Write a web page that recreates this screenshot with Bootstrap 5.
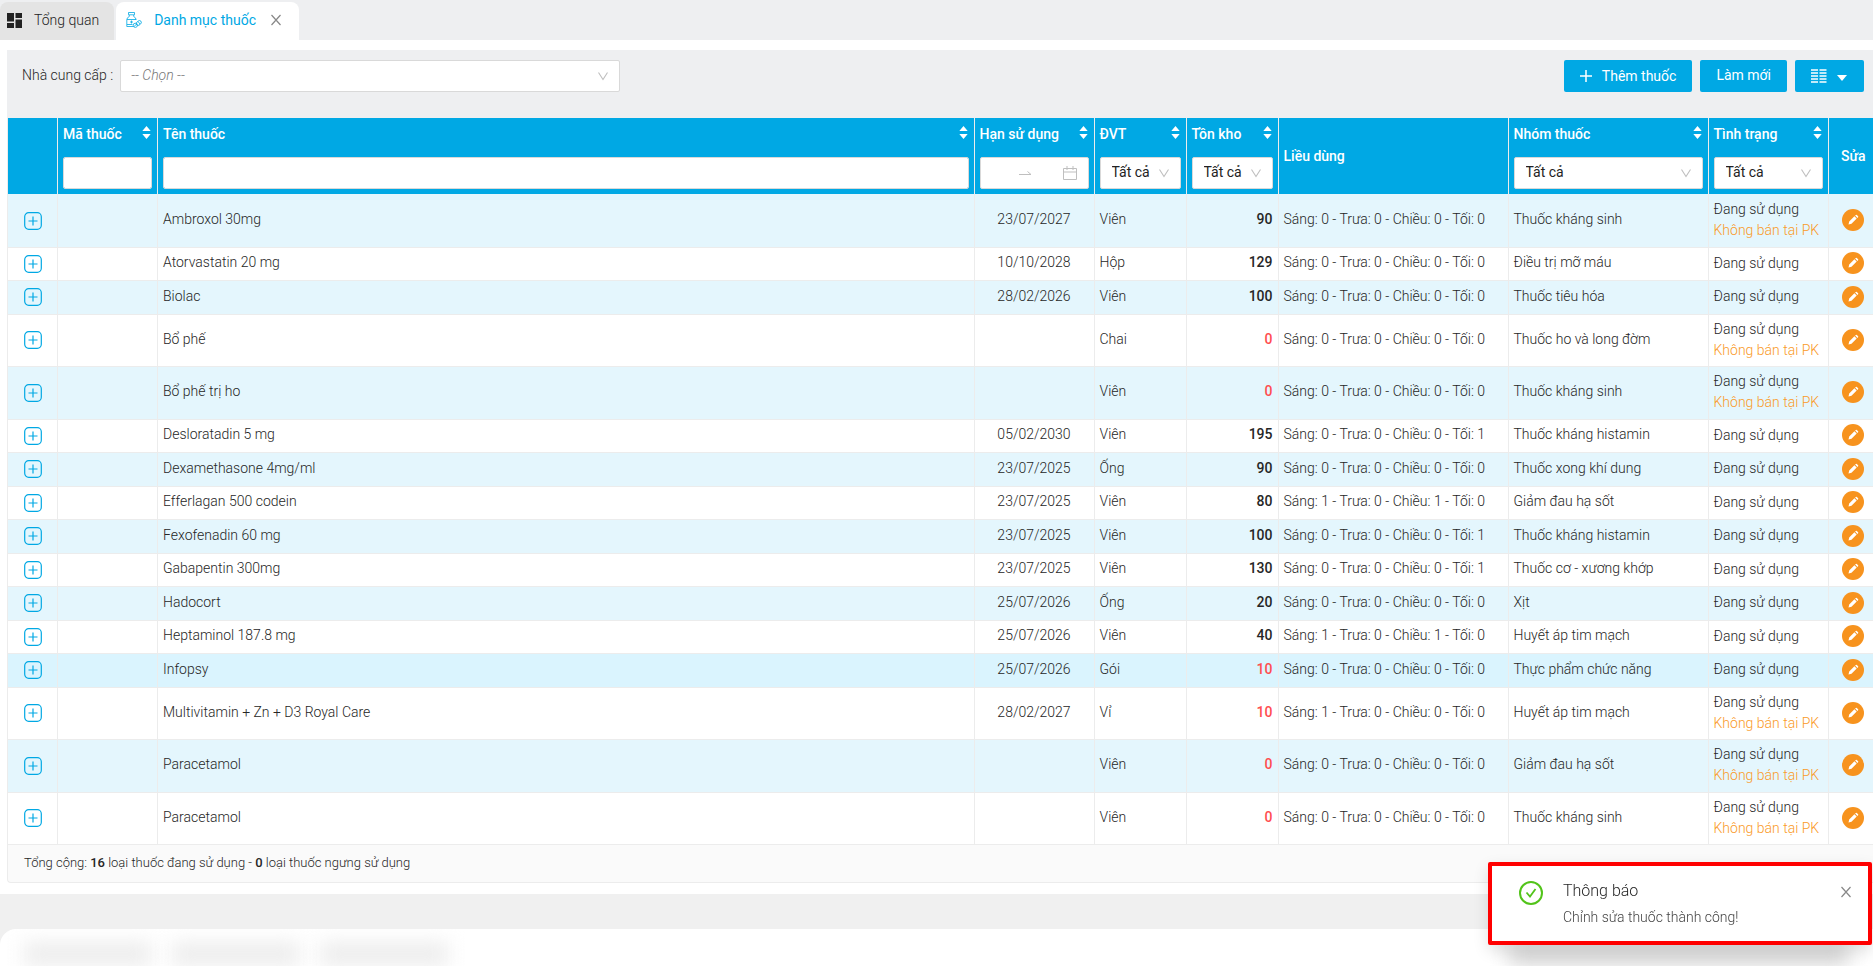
<!DOCTYPE html>
<html lang="vi">
<head>
<meta charset="utf-8">
<meta name="viewport" content="width=device-width, initial-scale=1">
<title>Danh mục thuốc</title>
<link href="https://cdn.jsdelivr.net/npm/bootstrap@5.3.0/dist/css/bootstrap.min.css" rel="stylesheet">
<style>
:root{--brand:#00a8e4;--panel:#eeeff1;--line:#ececec}
body{font-family:Roboto,"Noto Sans",sans-serif;font-size:14px;font-weight:300;line-height:21px;color:#262626;background:#f0f0f0;overflow-x:hidden}
.tabs{background:var(--panel);padding-top:2px;gap:2px}
.tab-link{height:38px;border-radius:8px 8px 0 0;background:#e4e4e4;color:#222;text-decoration:none;padding:0 15px 2px 7px;gap:12px}
.tab-on{background:#fff;color:var(--brand);font-weight:400;padding:0 17px 2px 10px}
.tab-on a{color:inherit;text-decoration:none;margin-right:2px}
.bare{border:0;background:none;padding:0;line-height:0}
.sheet{padding:10px 0 11px 7px}
.filters{background:var(--panel);height:68px;padding:10px 9px 0 15px}
.filters label{padding-top:5px;margin-right:7px}
.picker{width:500px;height:32px}
.form-select,.form-control{font-size:14px;font-weight:400;line-height:20px;color:#222;border:1px solid #d9d9d9;border-radius:2px;height:32px;min-height:0;padding:0 5px 2px 11px}
.form-select{background:#fff url("data:image/svg+xml,%3Csvg xmlns='http://www.w3.org/2000/svg' viewBox='0 0 12 12'%3E%3Cpath d='M1.500 2.500 6 9.500 10.500 2.500' fill='none' stroke='%23bfbfbf' stroke-width='1.100'/%3E%3C/svg%3E") no-repeat right 10px center/12px 12px}
.picker .form-select{font-style:italic;font-weight:300;color:#777;padding-left:10px}
.btn-brand{background:var(--brand);color:#fff;height:32px;border:0;border-radius:2px;font-size:14px;line-height:20px;padding:0 16px 2px}
.btn-brand:hover{background:#0090c8;color:#fff}
.btn-add{gap:10px;padding-bottom:0}
.btn-cols{gap:10px;padding:0 17px 0 16px}
.grid-table{table-layout:fixed;width:100%;margin:0;border-left:1px solid var(--line)}
.grid-table th,.grid-table td{border-right:1px solid var(--line);padding:0 5px;vertical-align:middle}
.grid-table th:last-child,.grid-table td:last-child{border-right:0;padding-right:0;text-align:center}
.grid-table thead th{background:var(--brand);color:#fff;font-weight:500;height:76px}
.head-line svg{margin:0 1px 3px 0}
.grid-table .form-select{padding-left:11px}
.grid-table .form-control,.grid-table .form-select,.dates{margin-top:12px}
.grid-table .tight{background-position:right 10px center;padding-left:11px;padding-right:24px}
.dates{height:32px;background:#fff;border:1px solid #d9d9d9;border-radius:2px;padding:0 11px}
.dates input{width:27px;border:0;padding:0;background:none;outline:0}
.grid-table tbody td{height:33px;border-bottom:1px solid var(--line);line-height:21px;padding-bottom:2px}
.grid-table tbody td:first-child,.grid-table tbody td:nth-last-child(-n+2){padding-bottom:1px}
.grid-table tbody tr.two td{height:52px}
.grid-table tbody tr:nth-child(odd) td{height:34px;background:#e4f6fd}
.grid-table tbody tr.two:nth-child(odd) td{height:53px}
.grid-table tbody tr.hover:nth-child(odd) td{background:#daf4fe}
.qty{font-weight:500;text-align:right}
.low{color:#ff4d4f}
.warn{color:#fa9a28}
.total{height:38px;background:#fafafa;border:1px solid var(--line);border-top:0;border-right:0;border-bottom-left-radius:4px;padding:0 16px 1px;font-size:13px}
.total b{font-weight:500}
.bottom{background:#fff;border-top-left-radius:16px;margin-top:35px;height:38px;overflow:hidden;padding:14px 24px;gap:20px}
.smudge{width:128px;height:22px;background:#ebebeb;filter:blur(10px)}
.smudge-end{width:340px;background:#d4d4d4}
.notice{right:1px;bottom:21px;width:384px;height:83px;background:#fff;border:4px solid #f00;border-radius:2px;box-shadow:0 6px 16px rgba(0,0,0,.12);padding:13px 16px 0 27px;gap:20px}
.notice h2{font-size:16px;font-weight:300;line-height:24px;margin:0 0 4px}
.notice p{margin:0;color:#444}
.notice-icon{margin-top:2px}
.notice .bare{margin-top:7px}
</style>
</head>
<body>
<svg class="d-none">
<symbol id="plus" viewBox="0 0 18 18"><rect x=".7" y=".7" width="16.600" height="16.600" rx="4" fill="none" stroke="#00a8e4" stroke-width="1.200"/><path d="M9 4.500v9M4.500 9h9" stroke="#00a8e4" stroke-width="1.200"/></symbol>
<symbol id="pen" viewBox="0 0 22 22"><circle cx="11" cy="11" r="11" fill="#f7931e"/><path d="M6.500 15.500l.7-3 5.200-5.200 2.300 2.300-5.200 5.200zM13.100 6.600l.7-.7q.5-.4 1 0l1.300 1.300q.4.500 0 1l-.7.700z" fill="#fff"/></symbol>
<symbol id="sort" viewBox="0 0 9 14"><path d="M4.500 0 9 5.500H0zM4.500 14 9 8.500H0z" fill="#fff"/></symbol>
<symbol id="x" viewBox="0 0 12 12"><path d="M1.500 1 10.500 11M10.500 1 1.500 11" stroke="#888" stroke-width="1.200"/></symbol>
</svg>

<nav class="tabs d-flex">
<a href="#" class="tab-link d-flex align-items-center"><svg width="15" height="15" viewBox="0 0 15 15" fill="#222"><path d="M0 0h7v8.500H0zM0 10h7v5H0zM8.500 0H15v5H8.500zM8.500 6.500H15V15H8.500z"/></svg>Tổng quan</a>
<div class="tab-link tab-on d-flex align-items-center">
<svg width="16" height="16" viewBox="0 0 16 16" fill="none" stroke="#00a8e4" stroke-width=".8"><path d="M2.500.5h6v2.300h-6zM3.300 3v1.500Q1 5.500.8 7.500v7h6.500M7.700 3v1.500Q10 5.500 10.200 8M1 7.500h9M1 12.500h5.500M5.500 8.500v3M4 10h3"/><ellipse cx="12.800" cy="11" rx="2.800" ry="2" transform="rotate(-40 12.800 11)"/><circle cx="9.300" cy="13.300" r="2.100"/><path d="M7.800 14.800l3-3M12 9.500l2 2.500"/></svg>
<a href="#">Danh mục thuốc</a><button class="bare" aria-label="Đóng tab"><svg width="12" height="12"><use href="#x"/></svg></button></div>
</nav>

<main class="bg-white sheet">
<div class="filters d-flex">
<label for="ncc">Nhà cung cấp :</label>
<div class="picker"><select id="ncc" class="form-select"><option>-- Chọn --</option></select></div>
<div class="ms-auto d-flex gap-2">
<button class="btn btn-brand btn-add d-flex align-items-center"><svg width="12" height="12" viewBox="0 0 12 12"><path d="M6 0v12M0 6h12" stroke="#fff" stroke-width="1.500"/></svg>Thêm thuốc</button>
<button class="btn btn-brand">Làm mới</button>
<button class="btn btn-brand btn-cols d-flex align-items-center" aria-label="Cột"><svg width="16" height="14" viewBox="0 0 16 14" stroke="#fff" stroke-width="1.400"><path d="M0 1h7M0 4h7M0 7h7M0 10h7M0 13h7M8.500 1h7M8.500 4h7M8.500 7h7M8.500 10h7M8.500 13h7"/></svg><svg class="mt-1" width="10" height="6"><path d="M0 0h10L5 6z" fill="#fff"/></svg></button>
</div>
</div>
<table class="grid-table">
<colgroup><col style="width:50px"><col style="width:100px"><col><col style="width:120px"><col style="width:92px"><col style="width:92px"><col style="width:230px"><col style="width:200px"><col style="width:120px"><col style="width:45px"></colgroup>
<thead><tr>
<th></th>
<th><div class="head-line d-flex justify-content-between align-items-center">Mã thuốc<svg width="9" height="13"><use href="#sort"/></svg></div><input class="form-control" aria-label="Mã thuốc"></th>
<th><div class="head-line d-flex justify-content-between align-items-center">Tên thuốc<svg width="9" height="13"><use href="#sort"/></svg></div><input class="form-control" aria-label="Tên thuốc"></th>
<th><div class="head-line d-flex justify-content-between align-items-center">Hạn sử dụng<svg width="9" height="13"><use href="#sort"/></svg></div><div class="dates d-flex align-items-center"><input aria-label="Từ ngày"><svg width="13" height="6" viewBox="0 0 13 6"><path d="M0 4.500h12L8.500 1.500" fill="none" stroke="#bfbfbf"/></svg><input aria-label="Đến ngày"><svg class="ms-auto" width="14" height="14" viewBox="0 0 14 14"><path d="M.5 2.500h13v11H.5zM.5 6h13M4 0v4M10 0v4" fill="none" stroke="#bfbfbf"/></svg></div></th>
<th><div class="head-line d-flex justify-content-between align-items-center">ĐVT<svg width="9" height="13"><use href="#sort"/></svg></div><select class="form-select tight" aria-label="ĐVT"><option>Tất cả</option></select></th>
<th><div class="head-line d-flex justify-content-between align-items-center">Tồn kho<svg width="9" height="13"><use href="#sort"/></svg></div><select class="form-select tight" aria-label="Tồn kho"><option>Tất cả</option></select></th>
<th>Liều dùng</th>
<th><div class="head-line d-flex justify-content-between align-items-center">Nhóm thuốc<svg width="9" height="13"><use href="#sort"/></svg></div><select class="form-select" aria-label="Nhóm thuốc"><option>Tất cả</option></select></th>
<th><div class="head-line d-flex justify-content-between align-items-center">Tình trạng<svg width="9" height="13"><use href="#sort"/></svg></div><select class="form-select" aria-label="Tình trạng"><option>Tất cả</option></select></th>
<th>Sửa</th>
</tr></thead>
<tbody id="rows"></tbody>
</table>
<div class="total d-flex align-items-center"><span>Tổng cộng: <b>16</b> loại thuốc đang sử dụng - <b>0</b> loại thuốc ngưng sử dụng</span></div>
</main>
<footer class="bottom d-flex"><div class="smudge"></div><div class="smudge"></div><div class="smudge"></div><div class="smudge smudge-end ms-auto"></div></footer>

<div class="notice position-fixed d-flex align-items-start" role="alert">
<svg class="notice-icon" width="24" height="24" viewBox="0 0 24 24" fill="none" stroke="#52c41a"><circle cx="12" cy="12" r="11" stroke-width="2"/><path d="M7.500 11.500l3.500 4 5.500-7.500" stroke-width="1.800"/></svg>
<div class="flex-grow-1"><h2>Thông báo</h2><p>Chỉnh sửa thuốc thành công!</p></div>
<button class="bare" aria-label="Đóng"><svg width="12" height="12"><use href="#x"/></svg></button>
</div>

<script src="https://cdn.jsdelivr.net/npm/bootstrap@5.3.0/dist/js/bootstrap.bundle.min.js"></script>
<script>
// name, expiry, unit, stock, low stock, doses, group, not sold at clinic
const drugs = [
["Ambroxol 30mg","23/07/2027","Viên",90,0,"0000","Thuốc kháng sinh",1],
["Atorvastatin 20 mg","10/10/2028","Hộp",129,0,"0000","Điều trị mỡ máu",0],
["Biolac","28/02/2026","Viên",100,0,"0000","Thuốc tiêu hóa",0],
["Bổ phế","","Chai",0,1,"0000","Thuốc ho và long đờm",1],
["Bổ phế trị ho","","Viên",0,1,"0000","Thuốc kháng sinh",1],
["Desloratadin 5 mg","05/02/2030","Viên",195,0,"0001","Thuốc kháng histamin",0],
["Dexamethasone 4mg/ml","23/07/2025","Ống",90,0,"0000","Thuốc xong khí dung",0],
["Efferlagan 500 codein","23/07/2025","Viên",80,0,"1010","Giảm đau hạ sốt",0],
["Fexofenadin 60 mg","23/07/2025","Viên",100,0,"0001","Thuốc kháng histamin",0],
["Gabapentin 300mg","23/07/2025","Viên",130,0,"0001","Thuốc cơ - xương khớp",0],
["Hadocort","25/07/2026","Ống",20,0,"0000","Xịt",0],
["Heptaminol 187.8 mg","25/07/2026","Viên",40,0,"1010","Huyết áp tim mạch",0],
["Infopsy","25/07/2026","Gói",10,1,"0000","Thực phẩm chức năng",0],
["Multivitamin + Zn + D3 Royal Care","28/02/2027","Vỉ",10,1,"1000","Huyết áp tim mạch",1],
["Paracetamol","","Viên",0,1,"0000","Giảm đau hạ sốt",1],
["Paracetamol","","Viên",0,1,"0000","Thuốc kháng sinh",1]];
document.getElementById("rows").innerHTML = drugs.map(([n,d,u,q,low,s,g,two]) =>
`<tr class="${two?"two":""} ${n=="Infopsy"?"hover":""}">
<td class="text-center"><button class="bare" aria-label="Mở rộng"><svg width="18" height="18"><use href="#plus"/></svg></button></td><td></td>
<td>${n}</td><td class="text-center">${d}</td><td>${u}</td><td class="qty ${low?"low":""}">${q}</td>
<td>Sáng: ${s[0]} - Trưa: ${s[1]} - Chiều: ${s[2]} - Tối: ${s[3]}</td><td>${g}</td>
<td class="text-nowrap">Đang sử dụng${two?'<div class="warn">Không bán tại PK</div>':""}</td>
<td><button class="bare" aria-label="Sửa ${n}"><svg width="22" height="22"><use href="#pen"/></svg></button></td></tr>`).join("");
</script>
</body>
</html>
